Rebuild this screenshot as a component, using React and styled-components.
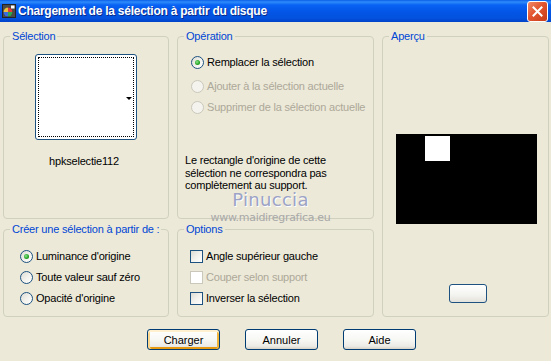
import styled, { createGlobalStyle } from "styled-components"

const Global = createGlobalStyle`
  html, body { margin: 0; padding: 0; background: #ECE9D8; }
  body { font-family: "Liberation Sans", Arial, sans-serif; font-size: 11px; color: #000; }
`

const Window = styled.div`
  position: relative;
  width: 551px;
  height: 361px;
  overflow: hidden;
  background: #ECE9D8;
  display: flex;
  flex-direction: column;
  letter-spacing: -0.2px;
`

const TitleBar = styled.div`
  height: 22px;
  flex: none;
  display: flex;
  align-items: center;
  padding-left: 2px;
  gap: 2px;
  background: linear-gradient(to bottom, #0A5FE8 0, #2F8CFB 2px, #0862F3 5px, #0355E6 12px, #0452DD 18px, #0043C9 22px);
`

const TitleText = styled.span`
  color: #fff;
  font-family: "Liberation Sans", Arial, sans-serif;
  font-weight: bold;
  font-size: 12px;
  letter-spacing: -0.25px;
  text-shadow: 1px 1px 0 #0A2A8A;
`

const CloseButton = styled.div`
  margin-left: auto;
  margin-right: 3px;
  width: 21px;
  height: 21px;
  box-sizing: border-box;
  border: 1px solid #fff;
  border-radius: 3px;
  background: linear-gradient(135deg, #F08A6A 0, #E2552F 45%, #C63D1A 100%);
  display: flex;
  align-items: center;
  justify-content: center;
`

const Body = styled.div`
  padding: 8px 0 0 3px;
  display: flex;
  flex-direction: column;
`

const Grid = styled.div`
  display: grid;
  grid-template-columns: 166px 197px 167px;
  grid-template-rows: 189px 94px;
  column-gap: 8px;
  row-gap: 4px;
`

const Group = styled.fieldset`
  margin: 0;
  padding: 0;
  min-width: 0;
  border: 1px solid #D0D0BF;
  border-radius: 4px;
  display: flex;
  flex-direction: column;
  align-items: ${(p) => (p.$center ? "center" : "stretch")};
  ${(p) => p.$span && "grid-row: span 2; grid-column: 3;"}
`

const Legend = styled.legend`
  color: #0046D5;
  margin-left: 6px;
  padding: 0 2px;
  font-size: 11px;
  line-height: 13px;
  white-space: nowrap;
`

const SelectionBox = styled.div`
  margin-top: 11px;
  width: 102px;
  height: 86px;
  box-sizing: border-box;
  border: 1px solid #1C5180;
  border-radius: 3px;
  background: #fff;
  padding: 2px;
`

const FocusRect = styled.div`
  height: 100%;
  box-sizing: border-box;
  border: 1px dotted #000;
  display: flex;
  align-items: center;
  justify-content: flex-end;
  padding-right: 1px;
`

const Arrow = styled.span`
  width: 0;
  height: 0;
  border-left: 3px solid transparent;
  border-right: 3px solid transparent;
  border-top: 3px solid #000;
  margin-top: 2px;
`

const FileName = styled.div`
  margin-top: 15px;
  line-height: 13px;
  padding-right: 4px;
`

const OptionList = styled.div`
  display: flex;
  flex-direction: column;
  gap: 8px;
  padding: ${(p) => p.$top}px 0 0 ${(p) => p.$indent}px;
  > :first-child { margin-bottom: ${(p) => p.$extra || 0}px; }
`

const Option = styled.label`
  display: flex;
  align-items: center;
  gap: 3px;
  height: 13px;
  line-height: 13px;
  color: ${(p) => (p.$disabled ? "#ACA899" : "#000")};
`

const RadioDot = styled.span`
  flex: none;
  width: 13px;
  height: 13px;
  box-sizing: border-box;
  border-radius: 50%;
  border: 1px solid ${(p) => (p.$disabled ? "#CAC8BB" : "#1C5180")};
  background: ${(p) =>
    p.$disabled ? "#F4F3EE" : "linear-gradient(135deg, #DCDBD3 0, #F2F1EC 50%, #fff 100%)"};
  display: flex;
  align-items: center;
  justify-content: center;
  &::after {
    content: "";
    display: ${(p) => (p.$checked ? "block" : "none")};
    width: 5px;
    height: 5px;
    border-radius: 50%;
    background: radial-gradient(circle at 40% 40%, #8CE68C 0, #21A121 60%, #1A801A 100%);
  }
`

const CheckBox = styled.span`
  flex: none;
  width: 13px;
  height: 13px;
  box-sizing: border-box;
  border: 1px solid ${(p) => (p.$disabled ? "#CAC8BB" : "#1C5180")};
  background: ${(p) =>
    p.$disabled ? "#fff" : "linear-gradient(135deg, #DCDBD3 0, #F2F1EC 50%, #fff 100%)"};
`

const Note = styled.p`
  margin: 40px 0 0 7px;
  line-height: 12.5px;
`

const Preview = styled.div`
  margin: 91px 0 0 13px;
  width: 141px;
  height: 90px;
  box-sizing: border-box;
  background: #000;
  padding: 2px 0 0 29px;
`

const PreviewMark = styled.div`
  width: 25px;
  height: 25px;
  background: #fff;
`

const MiniButton = styled.div`
  align-self: center;
  margin: 60px 0 0 4px;
  width: 38px;
  height: 19px;
  box-sizing: border-box;
  border: 1px solid #1C5180;
  border-radius: 3px;
  background: linear-gradient(#fff, #F3F3EF 60%, #E3E2DB);
`

const ButtonRow = styled.div`
  display: flex;
  gap: 25px;
  margin-top: 12px;
  padding-left: 144px;
`

const Button = styled.button`
  width: 73px;
  height: 21px;
  box-sizing: border-box;
  border: 1px solid #003C74;
  border-radius: 3px;
  padding: 0;
  font-family: "Liberation Sans", Arial, sans-serif;
  font-size: 11px;
  color: #000;
  background: linear-gradient(#FFFFFF 0, #F7F7F4 50%, #ECEBE6 85%, #D8D2C6 100%);
  box-shadow: ${(p) =>
    p.$default ? "inset 0 2px 0 #FFF0CF, inset 2px 0 0 #FBD88E, inset -2px 0 0 #F3B63C, inset 0 -2px 0 #E59A11" : "none"};
`

const Watermark = styled.div`
  position: absolute;
  left: 208px;
  top: 193px;
  width: 125px;
  text-align: center;
  pointer-events: none;
  font-family: "DejaVu Sans", sans-serif;
`

const WmName = styled.div`
  font-size: 18px;
  line-height: 14px;
  letter-spacing: 0.3px;
  color: #9CA3C6;
  text-shadow: 1px 1px 0 #fff;
`

const WmSite = styled.div`
  margin-top: 5px;
  font-size: 11px;
  line-height: 12px;
  letter-spacing: -0.3px;
  color: #A8A8A8;
`

function AppIcon() {
  return (
    <svg width="14" height="14" viewBox="0 0 14 14">
      <rect x="0.5" y="0.5" width="13" height="13" fill="#4A4A4A" stroke="#222" />
      <circle cx="6" cy="8" r="4.5" fill="#222" />
      <path d="M6 8 L6 3.5 A4.5 4.5 0 0 1 10.5 8 Z" fill="#E23B3B" />
      <path d="M6 8 L10.5 8 A4.5 4.5 0 0 1 6 12.5 Z" fill="#2FA84A" />
      <path d="M6 8 L6 12.5 A4.5 4.5 0 0 1 1.5 8 Z" fill="#3C6BE0" />
      <path d="M6 8 L1.5 8 A4.5 4.5 0 0 1 6 3.5 Z" fill="#E8C23A" />
      <rect x="9" y="1.5" width="3.5" height="3" fill="#fff" />
    </svg>
  )
}

function Radio({ label, checked, disabled }) {
  return (
    <Option $disabled={disabled}>
      <RadioDot $checked={checked} $disabled={disabled} />
      {label}
    </Option>
  )
}

function Check({ label, disabled }) {
  return (
    <Option $disabled={disabled}>
      <CheckBox $disabled={disabled} />
      {label}
    </Option>
  )
}

export default function App() {
  return (
    <>
      <Global />
      <Window>
        <TitleBar>
          <AppIcon />
          <TitleText>Chargement de la sélection à partir du disque</TitleText>
          <CloseButton>
            <svg width="11" height="11" viewBox="0 0 11 11">
              <path d="M1.5 1.5 L9.5 9.5 M9.5 1.5 L1.5 9.5" stroke="#fff" strokeWidth="2" strokeLinecap="square" />
            </svg>
          </CloseButton>
        </TitleBar>
        <Body>
          <Grid>
            <Group $center>
              <Legend>Sélection</Legend>
              <SelectionBox>
                <FocusRect>
                  <Arrow />
                </FocusRect>
              </SelectionBox>
              <FileName>hpkselectie112</FileName>
            </Group>
            <Group>
              <Legend>Opération</Legend>
              <OptionList $top={13} $indent={13} $extra={3}>
                <Radio label="Remplacer la sélection" checked />
                <Radio label="Ajouter à la sélection actuelle" disabled />
                <Radio label="Supprimer de la sélection actuelle" disabled />
              </OptionList>
              <Note>
                Le rectangle d'origine de cette
                <br />
                sélection ne correspondra pas
                <br />
                complètement au support.
              </Note>
            </Group>
            <Group $span>
              <Legend>Aperçu</Legend>
              <Preview>
                <PreviewMark />
              </Preview>
              <MiniButton />
            </Group>
            <Group>
              <Legend>Créer une sélection à partir de :</Legend>
              <OptionList $top={14} $indent={16}>
                <Radio label="Luminance d'origine" checked />
                <Radio label="Toute valeur sauf zéro" />
                <Radio label="Opacité d'origine" />
              </OptionList>
            </Group>
            <Group>
              <Legend>Options</Legend>
              <OptionList $top={14} $indent={12}>
                <Check label="Angle supérieur gauche" />
                <Check label="Couper selon support" disabled />
                <Check label="Inverser la sélection" />
              </OptionList>
            </Group>
          </Grid>
          <ButtonRow>
            <Button $default>Charger</Button>
            <Button>Annuler</Button>
            <Button>Aide</Button>
          </ButtonRow>
        </Body>
        <Watermark>
          <WmName>Pinuccia</WmName>
          <WmSite>www.maidiregrafica.eu</WmSite>
        </Watermark>
      </Window>
    </>
  )
}
